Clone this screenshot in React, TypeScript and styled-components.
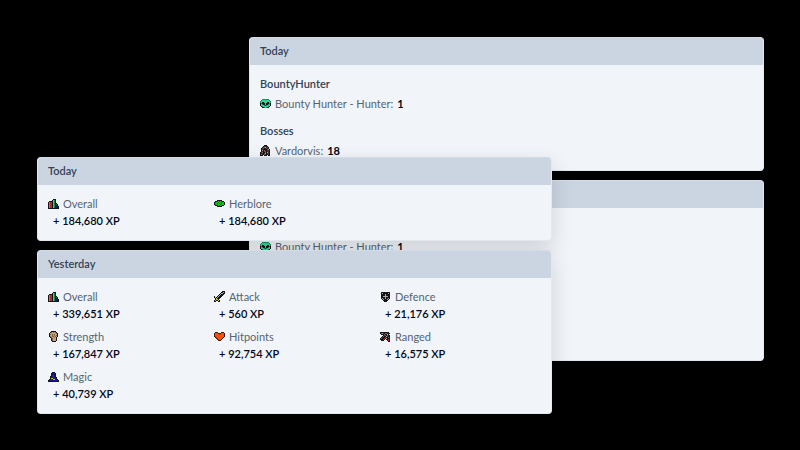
import React from "react";
import styled, { createGlobalStyle } from "styled-components";

const GlobalStyle = createGlobalStyle`
  * { box-sizing: border-box; }
  body {
    margin: 0;
    background: #000;
    color: #334155;
    font-family: Lato, "Liberation Sans", sans-serif;
    font-size: 11px;
  }
  h2, h3, p, dl, dt, dd { margin: 0; font-size: inherit; font-weight: inherit; }
`;

const Scene = styled.main`
  display: grid;
  grid-template-columns: 212fr 303fr 212fr;
  align-items: start;
  min-height: 100vh;
  padding: 37px 36px 36px 37px;
`;

const Stack = styled.section<{ $front?: boolean }>`
  display: grid;
  gap: 9px;
  grid-row: 1;
  grid-column: ${(p) => (p.$front ? "1 / 3" : "2 / 4")};
  margin-top: ${(p) => (p.$front ? "120px" : "0")};
  z-index: ${(p) => (p.$front ? 1 : 0)};
`;

const Card = styled.article<{ $raised?: boolean }>`
  overflow: hidden;
  border: 1px solid #e2e8f0;
  border-top-color: #d3dce6;
  border-radius: 4px;
  background: #f1f5f9;
  box-shadow: ${(p) => (p.$raised ? "0 8px 22px rgba(0, 0, 0, 0.14)" : "none")};
`;

const CardHeader = styled.h2`
  height: 27px;
  padding: 0 10px;
  background: #cbd5e1;
  color: #334155;
  font-family: "Lato Semibold", Lato, sans-serif;
  font-weight: 600;
  line-height: 26px;
`;

const Skills = styled.dl`
  display: grid;
  grid-template-columns: repeat(3, 1fr);
  gap: 5px;
  padding: 10px;
`;

const Label = styled.dt`
  display: flex;
  align-items: center;
  gap: 4px;
  height: 17px;
  color: #566473;
  font-size: 11px;
`;

const Gain = styled.dd`
  padding-left: 5px;
  color: #020617;
  font-family: "Lato Semibold", Lato, sans-serif;
  font-weight: 600;
  line-height: 18px;
`;

const Groups = styled.div`
  display: grid;
  gap: 8px;
  padding: 10px 10px 9px;
`;

const GroupTitle = styled.h3`
  color: #334155;
  font-family: "Lato Semibold", Lato, sans-serif;
  font-weight: 600;
  line-height: 18px;
`;

const Entry = styled.p`
  display: flex;
  align-items: center;
  gap: 4px;
  height: 21px;
  color: #566473;
  font-size: 11px;
`;

const Count = styled.strong`
  color: #020617;
  font-weight: 700;
`;

const Sprite = styled.svg`
  flex: none;
  width: 11px;
  height: 11px;
`;

const palette: Record<string, string> = {
  k: "#15151a",
  d: "#3c3a3a",
  g: "#168a3c",
  G: "#7db58a",
  r: "#b3262c",
  R: "#d06a6c",
  b: "#17178f",
  B: "#2820d0",
  l: "#12c41a",
  L: "#087a10",
  m: "#35d495",
  M: "#168f68",
  s: "#a8a9a6",
  w: "#e4e3df",
  y: "#c9bd24",
  o: "#f0520c",
  O: "#b93006",
  h: "#4a1c10",
  t: "#c4a27c",
  T: "#7d6148",
};

const sprites = {
  overall: [
    "...........",
    ".....kkk...",
    "....kGgk...",
    ".kkkkGgk...",
    "kRrrkGgk...",
    "kRrrkGgkk..",
    "kRrrkGgkgk.",
    "kRrrkGgkkk.",
    "kRrrkGgkbbk",
    "kRrrkGgkbbk",
    "kkkkkkkkkkk",
  ],
  herblore: [
    "...........",
    "...........",
    "...kkkkk...",
    ".kkLlLlLkk.",
    "kLllLllLllk",
    "kllLlLlLllk",
    "kLlLllLlllk",
    ".kkLlLlLkk.",
    "...kkkkk...",
    "...........",
    "...........",
  ],
  strength: [
    "...kkkkk...",
    "..kTtTtTk..",
    ".kttttttTk.",
    ".kTtTtTttk.",
    ".kttTtTtTk.",
    ".kTtTTtTtk.",
    "..kTttTtk..",
    "...kTtttk..",
    "...kTtttk..",
    "...kTtttk..",
    "....kkkk...",
  ],
  magic: [
    "...........",
    "....kkk....",
    "...kbbbk...",
    "...kbbkk...",
    "...kbBbk...",
    "..kbbBbk...",
    "..kbbBbbk..",
    "..kyybbbk..",
    ".kbbbyybbk.",
    "kbbbbbbbbbk",
    "kkkkkkkkkkk",
  ],
  attack: [
    "........kkk",
    ".......kksk",
    "......ksskk",
    ".....kskkk.",
    "....kskkk..",
    "k..kskkk...",
    "kykskkk....",
    ".kykkk.....",
    ".kyyk......",
    "kykkyk.....",
    "kk..kk.....",
  ],
  hitpoints: [
    "...........",
    ".hhh...hhh.",
    "hooohhhoooh",
    "hooooOooooh",
    "hoooooooooh",
    "hOooooooooh",
    ".hOooooooh.",
    "..hOooooh..",
    "...hOooh...",
    "....hhh....",
    "...........",
  ],
  defence: [
    "...........",
    ".kkkkkkkkk.",
    ".kskkkkksk.",
    ".kkkkskkkk.",
    ".kkkkskkkk.",
    ".kkssssskk.",
    ".kkkkskkkk.",
    ".kskkskksk.",
    "..kskkksk..",
    "...kkkkk...",
    "....kkk....",
  ],
  ranged: [
    "...........",
    "kkkkkkkkk..",
    "kTsdkTTdkk.",
    ".kkkTkksk..",
    "...kdTkTkk.",
    "..kTkksdkk.",
    ".kdkkTkkTk.",
    "kTkkOkskkk.",
    "kkkOk.kkrk.",
    ".kkk...krk.",
    "........kk.",
  ],
  hunter: [
    "...........",
    "..MMMMMMM..",
    ".MmmmmmmmM.",
    "MmmmmmmmmmM",
    "MmkkmmmkkmM",
    "kMkkkmkkkMk",
    "kmMkkmkkMmk",
    "kmmmMkMmmmk",
    ".kMmmmmmMk.",
    "..kkMmMkk..",
    "...........",
  ],
  vardorvis: [
    "....kkk....",
    "...kddkk...",
    "..kdTsddk..",
    ".kdTkkTdk..",
    ".kdkkkkdsk.",
    ".kskTkkddk.",
    ".kdkrTkddk.",
    "kdTkkTksdk.",
    "kddkdskddk.",
    "kTkkTdkkdk.",
    "kkk.kkk.kk.",
  ],
};

type SpriteName = keyof typeof sprites;

function PixelIcon({ name }: { name: SpriteName }) {
  return (
    <Sprite viewBox="0 0 11 11" aria-hidden="true" shapeRendering="crispEdges">
      {sprites[name].flatMap((row, y) =>
        [...row].map((pixel, x) =>
          pixel === "." ? null : (
            <rect key={`${x}-${y}`} x={x} y={y} width="1" height="1" fill={palette[pixel]} />
          )
        )
      )}
    </Sprite>
  );
}

type Skill = { icon: SpriteName; name: string; xp: string };
type Group = { title: string; icon: SpriteName; name: string; count: number };

function SkillCard({ day, skills }: { day: string; skills: Skill[] }) {
  return (
    <Card $raised>
      <CardHeader>{day}</CardHeader>
      <Skills>
        {skills.map((skill) => (
          <div key={skill.name}>
            <Label>
              <PixelIcon name={skill.icon} />
              {skill.name}
            </Label>
            <Gain>+ {skill.xp} XP</Gain>
          </div>
        ))}
      </Skills>
    </Card>
  );
}

function ActivityCard({ day, groups }: { day: string; groups: Group[] }) {
  return (
    <Card>
      <CardHeader>{day}</CardHeader>
      <Groups>
        {groups.map((group) => (
          <div key={group.title}>
            <GroupTitle>{group.title}</GroupTitle>
            <Entry>
              <PixelIcon name={group.icon} />
              <span>{group.name}:</span>
              <Count>{group.count}</Count>
            </Entry>
          </div>
        ))}
      </Groups>
    </Card>
  );
}

const bounty: Group = {
  title: "BountyHunter",
  icon: "hunter",
  name: "Bounty Hunter - Hunter",
  count: 1,
};

export default function App() {
  return (
    <>
      <GlobalStyle />
      <Scene>
        <Stack>
          <ActivityCard
            day="Today"
            groups={[bounty, { title: "Bosses", icon: "vardorvis", name: "Vardorvis", count: 18 }]}
          />
          <ActivityCard
            day="Yesterday"
            groups={[
              bounty,
              { title: "Bosses", icon: "vardorvis", name: "Cerberus", count: 41 },
              { title: "Raids", icon: "defence", name: "Theatre of Blood", count: 1 },
            ]}
          />
        </Stack>
        <Stack $front>
          <SkillCard
            day="Today"
            skills={[
              { icon: "overall", name: "Overall", xp: "184,680" },
              { icon: "herblore", name: "Herblore", xp: "184,680" },
            ]}
          />
          <SkillCard
            day="Yesterday"
            skills={[
              { icon: "overall", name: "Overall", xp: "339,651" },
              { icon: "attack", name: "Attack", xp: "560" },
              { icon: "defence", name: "Defence", xp: "21,176" },
              { icon: "strength", name: "Strength", xp: "167,847" },
              { icon: "hitpoints", name: "Hitpoints", xp: "92,754" },
              { icon: "ranged", name: "Ranged", xp: "16,575" },
              { icon: "magic", name: "Magic", xp: "40,739" },
            ]}
          />
        </Stack>
      </Scene>
    </>
  );
}
